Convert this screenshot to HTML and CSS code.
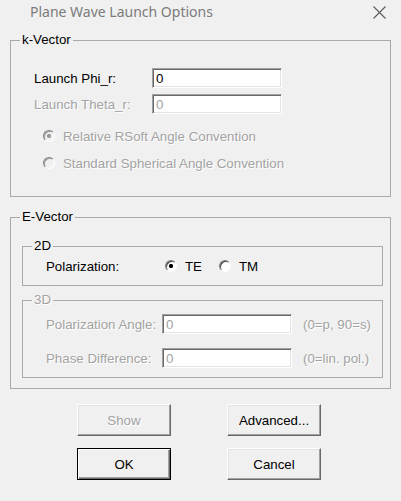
FILE: index.html
```html
<!DOCTYPE html>
<html lang="en">
<head>
    <meta charset="UTF-8">
    <title>Plane Wave Launch Options</title>
    <link rel="stylesheet" href="styles.css">
</head>
<body>

    <div class="titlebar">
        <span class="title">Plane Wave Launch Options</span>
        <svg class="close" width="13" height="13" viewBox="0 0 13 13">
            <path d="M0.5 0.5 L12.5 12.5 M12.5 0.5 L0.5 12.5" stroke="#5a5a5a" stroke-width="1.1" fill="none"/>
        </svg>
    </div>

    <form class="dialog">
        <!-- k-Vector -->
        <fieldset class="group kvector">
            <legend>k-Vector</legend>
            <div class="row">
                <label class="lbl" for="phi">Launch Phi_r:</label>
                <input type="text" id="phi" class="field" value="0">
            </div>
            <div class="row">
                <label class="lbl off" for="theta">Launch Theta_r:</label>
                <input type="text" id="theta" class="field" value="0" disabled>
            </div>
            <div class="radios">
                <label class="opt off"><input type="radio" name="conv" checked disabled> Relative RSoft Angle Convention</label>
                <label class="opt off"><input type="radio" name="conv" disabled> Standard Spherical Angle Convention</label>
            </div>
        </fieldset>

        <!-- E-Vector -->
        <fieldset class="group evector">
            <legend>E-Vector</legend>

            <fieldset class="group two-d">
                <legend>2D</legend>
                <div class="row short">
                    <span class="lbl pol">Polarization:</span>
                    <label class="opt inline"><input type="radio" name="pol" checked> TE</label>
                    <label class="opt inline"><input type="radio" name="pol"> TM</label>
                </div>
            </fieldset>

            <fieldset class="group three-d">
                <legend class="off">3D</legend>
                <div class="row">
                    <label class="lbl sub off" for="angle">Polarization Angle:</label>
                    <input type="text" id="angle" class="field" value="0" disabled>
                    <span class="hint off">(0=p, 90=s)</span>
                </div>
                <div class="row gap">
                    <label class="lbl sub off" for="phase">Phase Difference:</label>
                    <input type="text" id="phase" class="field" value="0" disabled>
                    <span class="hint off">(0=lin. pol.)</span>
                </div>
            </fieldset>
        </fieldset>

        <div class="buttons">
            <button type="button" class="btn" disabled>Show</button>
            <button type="button" class="btn">Advanced...</button>
            <button type="submit" class="btn default">OK</button>
            <button type="button" class="btn">Cancel</button>
        </div>
    </form>

</body>
</html>
```

FILE: styles.css
```css
body {
    margin: 0;
    background: #f0f0f0;
    font-family: "Liberation Sans", Arial, sans-serif;
    font-size: 13.3px;
    color: #000;
}
.titlebar {
    height: 32px;
    display: flex;
    justify-content: space-between;
    align-items: flex-start;
    padding: 0 15px 0 30px;
}
.title {
    font-family: "Noto Sans", sans-serif;
    font-size: 14px;
    line-height: 24px;
    color: #7b7b7b;
}
.close {
    margin-top: 6px;
}
.dialog {
    padding: 0 10px;
}
.group {
    margin: 0;
    min-width: 0;
    border: 1px solid #a9a9a9;
}
.group legend {
    padding: 0 2px;
    line-height: 16px;
}
.kvector {
    padding: 20px 10px 24px 23px;
}
.kvector > legend,
.two-d > legend,
.three-d > legend {
    margin-left: -14px;
}
.evector {
    margin-top: 12px;
    padding: 13px 7px 10px 11px;
}
.evector > legend {
    margin-left: -2px;
}
.two-d {
    padding: 3px 10px 10px 23px;
}
.three-d {
    margin-top: 6px;
    padding: 6px 10px 9px 23px;
}
.row {
    display: flex;
    align-items: center;
    height: 20px;
}
.row + .row {
    margin-top: 6px;
}
.row.gap {
    margin-top: 14px;
}
.row.short {
    height: 18px;
}
.lbl {
    width: 118px;
    flex: none;
}
.lbl.pol {
    width: 119px;
}
.lbl.sub {
    width: 116px;
}
.off {
    color: #a3a3a3;
    text-shadow: 1px 1px 0 #fff;
}
.field {
    box-sizing: border-box;
    width: 130px;
    height: 20px;
    margin: 0;
    padding: 1px 3px 0;
    font: inherit;
    color: #000;
    background: #fff;
    border: 1px solid;
    border-color: #a0a0a0 #fff #fff #a0a0a0;
    box-shadow: inset 1px 1px 0 #696969, inset -1px -1px 0 #e3e3e3;
    outline: none;
}
.field:disabled {
    color: #a3a3a3;
}
.hint {
    margin-left: 11px;
}
.radios {
    margin-top: 13px;
    padding-left: 9px;
    display: flex;
    flex-direction: column;
    gap: 9px;
}
.opt {
    display: flex;
    align-items: center;
    height: 18px;
}
.opt.inline {
    margin-right: 17px;
}
input[type=radio] {
    appearance: none;
    box-sizing: border-box;
    width: 12px;
    height: 12px;
    margin: 0 8px 0 0;
    border-radius: 50%;
    border: 1px solid;
    border-color: #808080 #fff #fff #808080;
    background: #fff;
    box-shadow: inset 1px 1px 0 #404040;
    flex: none;
}
input[type=radio]:checked {
    background: radial-gradient(circle, #000 0 1.8px, #fff 2.4px);
}
input[type=radio]:disabled {
    background: #f0f0f0;
    box-shadow: inset 1px 1px 0 #a0a0a0;
}
input[type=radio]:disabled:checked {
    background: radial-gradient(circle, #9a9a9a 0 1.8px, #f0f0f0 2.4px);
}
.buttons {
    display: grid;
    grid-template-columns: 94px 94px;
    column-gap: 56px;
    row-gap: 12px;
    margin-top: 15px;
    padding-left: 67px;
}
.btn {
    box-sizing: border-box;
    height: 32px;
    margin: 0;
    padding: 0;
    font: inherit;
    color: #000;
    background: #f0f0f0;
    border: 1px solid;
    border-color: #fff #696969 #696969 #fff;
    box-shadow: inset -1px -1px 0 #a0a0a0, inset 1px 1px 0 #e3e3e3;
}
.btn:disabled {
    color: #a3a3a3;
    text-shadow: 1px 1px 0 #fff;
}
.btn.default {
    border-color: #000;
    box-shadow: inset 1px 1px 0 #fff, inset -1px -1px 0 #696969, inset -2px -2px 0 #a0a0a0;
}
```
